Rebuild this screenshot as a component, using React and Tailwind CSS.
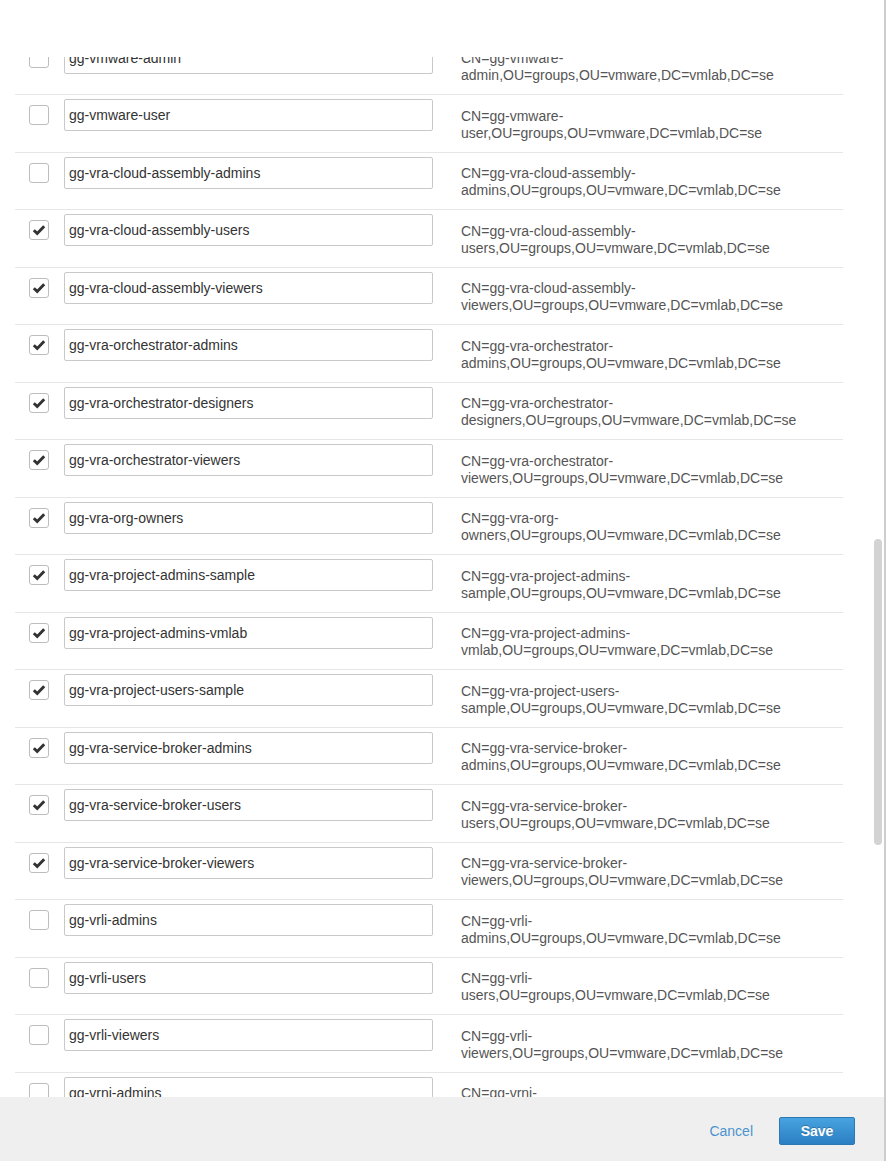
import React from "react";

const groups = [
  ["gg-vmware-admin", false],
  ["gg-vmware-user", false],
  ["gg-vra-cloud-assembly-admins", false],
  ["gg-vra-cloud-assembly-users", true],
  ["gg-vra-cloud-assembly-viewers", true],
  ["gg-vra-orchestrator-admins", true],
  ["gg-vra-orchestrator-designers", true],
  ["gg-vra-orchestrator-viewers", true],
  ["gg-vra-org-owners", true],
  ["gg-vra-project-admins-sample", true],
  ["gg-vra-project-admins-vmlab", true],
  ["gg-vra-project-users-sample", true],
  ["gg-vra-service-broker-admins", true],
  ["gg-vra-service-broker-users", true],
  ["gg-vra-service-broker-viewers", true],
  ["gg-vrli-admins", false],
  ["gg-vrli-users", false],
  ["gg-vrli-viewers", false],
  ["gg-vrni-admins", false],
  ["gg-vrni-users", false],
];

const CheckMark = () => (
  <svg width="14" height="12" viewBox="0 0 14 12" fill="none">
    <path
      d="M1.8 6.2 L5.2 9.4 L12.2 2.2"
      stroke="#333"
      strokeWidth="2.9"
      strokeLinejoin="miter"
    />
  </svg>
);

// split the DN after the last hyphen of the group name, like the browser wraps it
const dnLines = (name) => {
  const cut = name.lastIndexOf("-") + 1;
  return [
    `CN=${name.slice(0, cut)}`,
    `${name.slice(cut)},OU=groups,OU=vmware,DC=vmlab,DC=se`,
  ];
};

const GroupRow = ({ name, checked }) => {
  const [first, second] = dnLines(name);
  return (
    <div className="flex h-[57.5px] items-start border-t border-[#e6e6e6]">
      <div className="ml-[14px] mt-[10px] flex h-[20px] w-[20px] shrink-0 items-center justify-center rounded-[3px] border border-[#bdbdbd] bg-white">
        {checked && <CheckMark />}
      </div>
      <input
        readOnly
        value={name}
        className="ml-[15px] mt-[4px] h-[32px] w-[369px] shrink-0 rounded-[2px] border border-[#c9c9c9] bg-white px-[4px] text-[14px] text-[#333] outline-none"
      />
      <div className="ml-[28px] mt-[12.5px] w-[370px] text-[14px] leading-[17px] text-[#555]">
        <div>{first}</div>
        <div>{second}</div>
      </div>
    </div>
  );
};

export default function App() {
  return (
    <div className="relative flex h-[1161px] w-[886px] flex-col overflow-hidden border-r-2 border-[#cdcdcd] bg-white font-['Liberation_Sans',Arial,sans-serif]">
      <div className="h-[57px] shrink-0" />

      {/* scrolled list */}
      <div className="h-[1040px] shrink-0 overflow-hidden">
        <div className="ml-[15px] mt-[-20.5px] w-[828px]">
          {groups.map(([name, checked]) => (
            <GroupRow key={name} name={name} checked={checked} />
          ))}
        </div>
      </div>

      {/* Footer */}
      <div className="flex h-[64px] shrink-0 items-start justify-end bg-[#efefef] pr-[29px] pt-[20px]">
        <button className="mr-[26px] flex h-[28px] items-center text-[14px] text-[#4b93cf]">
          Cancel
        </button>
        <button className="flex h-[28px] w-[76px] items-center justify-center rounded-[2px] border border-[#2c78b7] bg-linear-to-b from-[#47a3df] to-[#2b7fc3] text-[14px] font-bold text-white [text-shadow:0_-1px_0_rgba(0,0,0,0.25)]">
          Save
        </button>
      </div>

      {/* scrollbar thumb */}
      <div className="absolute right-[2px] top-[539px] h-[306px] w-[8px] rounded-full bg-[#d3d3d3]" />
    </div>
  );
}
